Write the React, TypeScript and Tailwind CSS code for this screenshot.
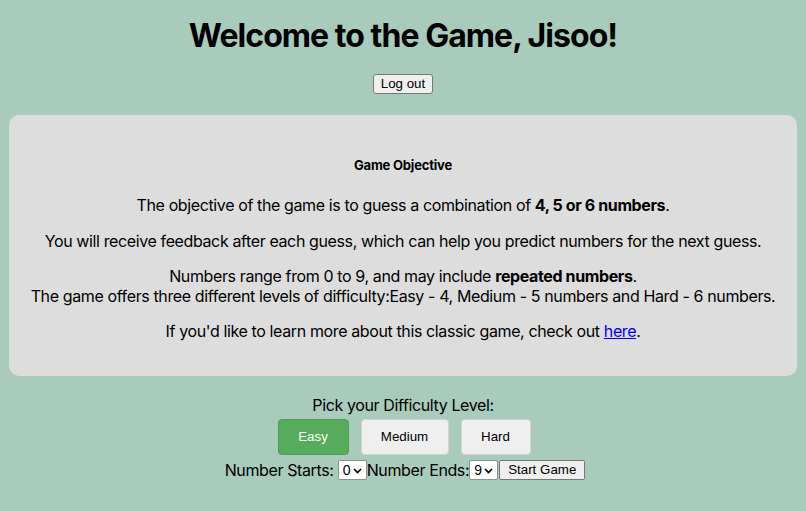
import React from "react";

const Chevron = () => (
  <svg width="9" height="6" viewBox="0 0 9 6" className="absolute right-[4px] top-[7px]">
    <path d="M1 1 L4.5 4.5 L8 1" fill="none" stroke="#000" strokeWidth="1.7" />
  </svg>
);

const FakeSelect = ({ value }: { value: string }) => (
  <span className="relative inline-block w-[29px] h-[20px] bg-white border border-[#8f8f8f] rounded-[2px] align-middle font-['Liberation_Sans',Arial,sans-serif] tracking-normal">
    <span className="absolute left-[4px] top-[1px] text-[14px] leading-[17px]">{value}</span>
    <Chevron />
  </span>
);

export default function App() {
  return (
    <div className="min-h-[511px] bg-[#a9cbbc] text-black text-center font-['Inter','Liberation_Sans',sans-serif] pt-[16px] tracking-[-0.38px]">
      <h1 className="text-[32px] font-bold leading-[39px] m-0 tracking-[-0.95px]">Welcome to the Game, Jisoo!</h1>
      <div className="mt-[19px] tracking-normal leading-none">
        <button className="font-['Liberation_Sans',Arial,sans-serif] text-[13.33px] leading-[16px] h-[20px] px-[7px] bg-[#efefef] border border-[#767676] rounded-[3px]">
          Log out
        </button>
      </div>
      <div className="mx-[9px] mt-[21px] bg-[#dddddd] rounded-[10px] px-[4px] pt-[42px] pb-[35px]">
        <h5 className="text-[13px] font-bold leading-[16px] tracking-[-0.2px]">Game Objective</h5>
        <p className="mt-[22px] text-[16px] leading-[20px]">
          The objective of the game is to guess a combination of <b>4, 5 or 6 numbers</b>.
        </p>
        <p className="mt-[16px] text-[16px] leading-[20px]">
          You will receive feedback after each guess, which can help you predict numbers for the next guess.
        </p>
        <p className="mt-[15px] text-[16px] leading-[20px] whitespace-nowrap">
          Numbers range from 0 to 9, and may include <b>repeated numbers</b>.
          <br />
          The game offers three different levels of difficulty:Easy - 4, Medium - 5 numbers and Hard - 6 numbers.
        </p>
        <p className="mt-[15px] text-[16px] leading-[20px]">
          If you'd like to learn more about this classic game, check out{" "}
          <a href="#" className="text-[#0000ee] underline">here</a>.
        </p>
      </div>
      <div className="mt-[19px] text-[16px] leading-[20px]">Pick your Difficulty Level:</div>
      <div className="flex justify-center gap-[12px] mt-[4px] font-['Liberation_Sans',Arial,sans-serif] text-[13.33px] tracking-normal">
        <button className="ml-[2px] w-[71px] h-[36px] rounded-[4px] bg-[#56ab5c] text-white border border-[#4f9e55]">Easy</button>
        <button className="w-[88px] h-[36px] rounded-[4px] bg-[#efefef] border border-[#d4d4d4]">Medium</button>
        <button className="w-[70px] h-[36px] rounded-[4px] bg-[#efefef] border border-[#d4d4d4]">Hard</button>
      </div>
      <div className="flex justify-center items-center mt-[5px] pl-[4px] text-[16px] leading-[20px]">
        <span>Number Starts:&nbsp;</span>
        <FakeSelect value="0" />
        <span>Number Ends:</span>
        <FakeSelect value="9" />
        <button className="ml-[1px] font-['Liberation_Sans',Arial,sans-serif] text-[13.33px] leading-[16px] h-[20px] px-[8px] bg-[#efefef] border border-[#767676] rounded-[2px] tracking-normal">
          Start Game
        </button>
      </div>
    </div>
  );
}
